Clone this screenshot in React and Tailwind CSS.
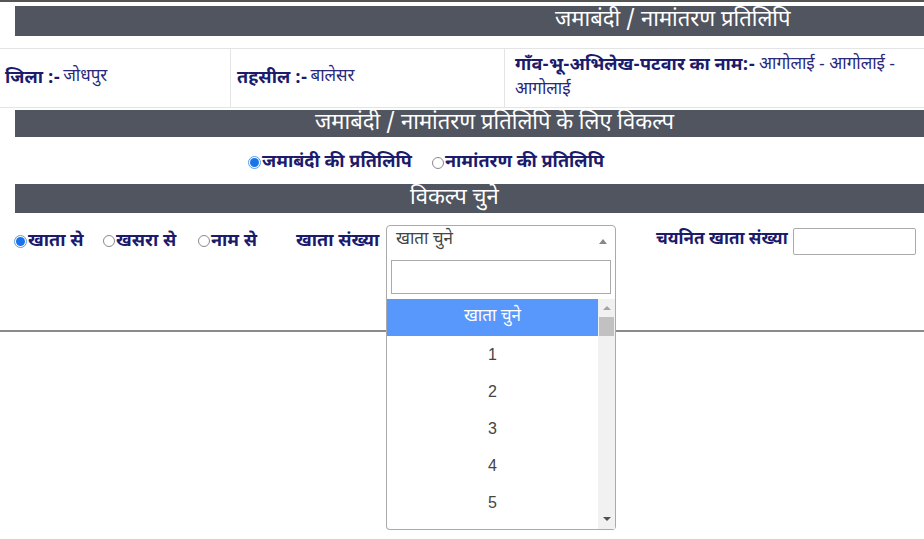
const font = { fontFamily: '"Noto Sans Devanagari", "Noto Sans", "Liberation Sans", sans-serif' };

const Radio = ({ checked, label }) => (
  <label className="flex items-center text-[18px] font-bold text-[#1c1a6b] whitespace-nowrap">
    {checked ? (
      <span className="w-[13px] h-[13px] rounded-full border border-[#5a9be8] bg-white flex items-center justify-center mr-[1px]">
        <span className="w-[9px] h-[9px] rounded-full bg-[#1a73e8]" />
      </span>
    ) : (
      <span className="w-[12px] h-[12px] rounded-full border border-[#8a8a8a] bg-white mr-[1px]" />
    )}
    {label}
  </label>
);

const Bar = ({ children, pad, h }) => (
  <div className={`ml-[15px] bg-[#50555f] text-white text-[22px] leading-none flex items-center whitespace-nowrap ${pad} ${h}`}>
    {children}
  </div>
);

export default function App() {
  const items = ["1", "2", "3", "4", "5"];

  return (
    <div className="relative w-[924px] h-[539px] bg-white overflow-hidden" style={font}>
      <div className="border-t-2 border-[#555]" />

      {/* title */}
      <div className="pt-[4px]">
        <Bar pad="pl-[540px]" h="h-[30px]">जमाबंदी / नामांतरण प्रतिलिपि</Bar>
      </div>

      {/* district row */}
      <div className="mt-[12px] flex border-t border-b border-[#e4e4e4] h-[60px] text-[#1c1a6b]">
        <div className="w-[231px] flex items-center pl-[5px] border-r border-[#e4e4e4] whitespace-nowrap">
          <span className="text-[18px] font-bold">जिला :-</span>
          <span className="text-[17px] ml-[3px] text-[#29287a]">जोधपुर</span>
        </div>
        <div className="w-[274px] flex items-center pl-[6px] border-r border-[#e4e4e4] whitespace-nowrap">
          <span className="text-[18px] font-bold">तहसील :-</span>
          <span className="text-[17px] ml-[3px] text-[#29287a]">बालेसर</span>
        </div>
        <div className="flex-1 flex flex-col justify-center pl-[10px] pr-[14px] leading-[25px] whitespace-nowrap">
          <div className="flex">
            <span className="text-[18px] font-bold">गाँव-भू-अभिलेख-पटवार का नाम:-</span>
            <span className="text-[17px] ml-[4px] text-[#29287a]">आगोलाई - आगोलाई -</span>
          </div>
          <span className="text-[17px] text-[#29287a]">आगोलाई</span>
        </div>
      </div>

      <div className="mt-[2px]">
        <Bar pad="pl-[300px]" h="h-[27px]">जमाबंदी / नामांतरण प्रतिलिपि के लिए विकल्प</Bar>
      </div>

      <div className="h-[47px] flex items-center pt-[4px] pl-[248px]">
        <div className="w-[184px]"><Radio checked label="जमाबंदी की प्रतिलिपि" /></div>
        <Radio label="नामांतरण की प्रतिलिपि" />
      </div>

      <Bar pad="pl-[395px]" h="h-[29px]">विकल्प चुने</Bar>

      {/* options row */}
      <div className="mt-[12px] h-[32px] flex items-center pl-[14px]">
        <div className="w-[89px]"><Radio checked label="खाता से" /></div>
        <div className="w-[95px]"><Radio label="खसरा से" /></div>
        <div className="w-[98px]"><Radio label="नाम से" /></div>
        <span className="w-[90px] text-[18px] font-bold text-[#1c1a6b] whitespace-nowrap">खाता संख्या</span>
        <div className="w-[230px] h-[32px] border border-[#aaa] rounded-t-[4px] flex items-center justify-between pl-[9px] pr-[8px] text-[17px] text-[#444]">
          खाता चुने
          <span className="w-0 h-0 border-x-[4px] border-x-transparent border-b-[5px] border-b-[#888]" />
        </div>
        <span className="ml-[40px] w-[137px] text-[17px] font-bold text-[#1c1a6b] whitespace-nowrap">चयनित खाता संख्या</span>
        <div className="w-[123px] h-[27px] border border-[#aaa] rounded-[2px]" />
      </div>

      <div className="mt-[73px] border-t-2 border-[#8a8a8a]" />

      {/* dropdown */}
      <div className="absolute left-[386px] top-[256px] w-[230px] h-[274px] bg-white border border-t-0 border-[#aaa] rounded-b-[4px] flex flex-col">
        <div className="p-[4px]">
          <div className="h-[34px] border border-[#aaa]" />
        </div>
        <div className="flex flex-1 min-h-0 overflow-hidden mt-[1px]">
          <div className="flex-1">
            <div className="h-[37px] bg-[#5897fb] text-white text-[17px] flex items-center justify-center">
              खाता चुने
            </div>
            {items.map((n) => (
              <div key={n} className="h-[37px] flex items-center justify-center text-[16px] text-[#444]" style={{ fontFamily: '"Liberation Sans", sans-serif' }}>
                {n}
              </div>
            ))}
          </div>
          <div className="w-[17px] bg-[#f1f1f1] flex flex-col items-center">
            <span className="mt-[7px] w-0 h-0 border-x-[4px] border-x-transparent border-b-[4px] border-b-[#a3a3a3]" />
            <div className="mt-[7px] w-[15px] h-[19px] bg-[#c1c1c1]" />
            <div className="flex-1" />
            <span className="mb-[8px] w-0 h-0 border-x-[4px] border-x-transparent border-t-[4px] border-t-[#505050]" />
          </div>
        </div>
      </div>
    </div>
  );
}
